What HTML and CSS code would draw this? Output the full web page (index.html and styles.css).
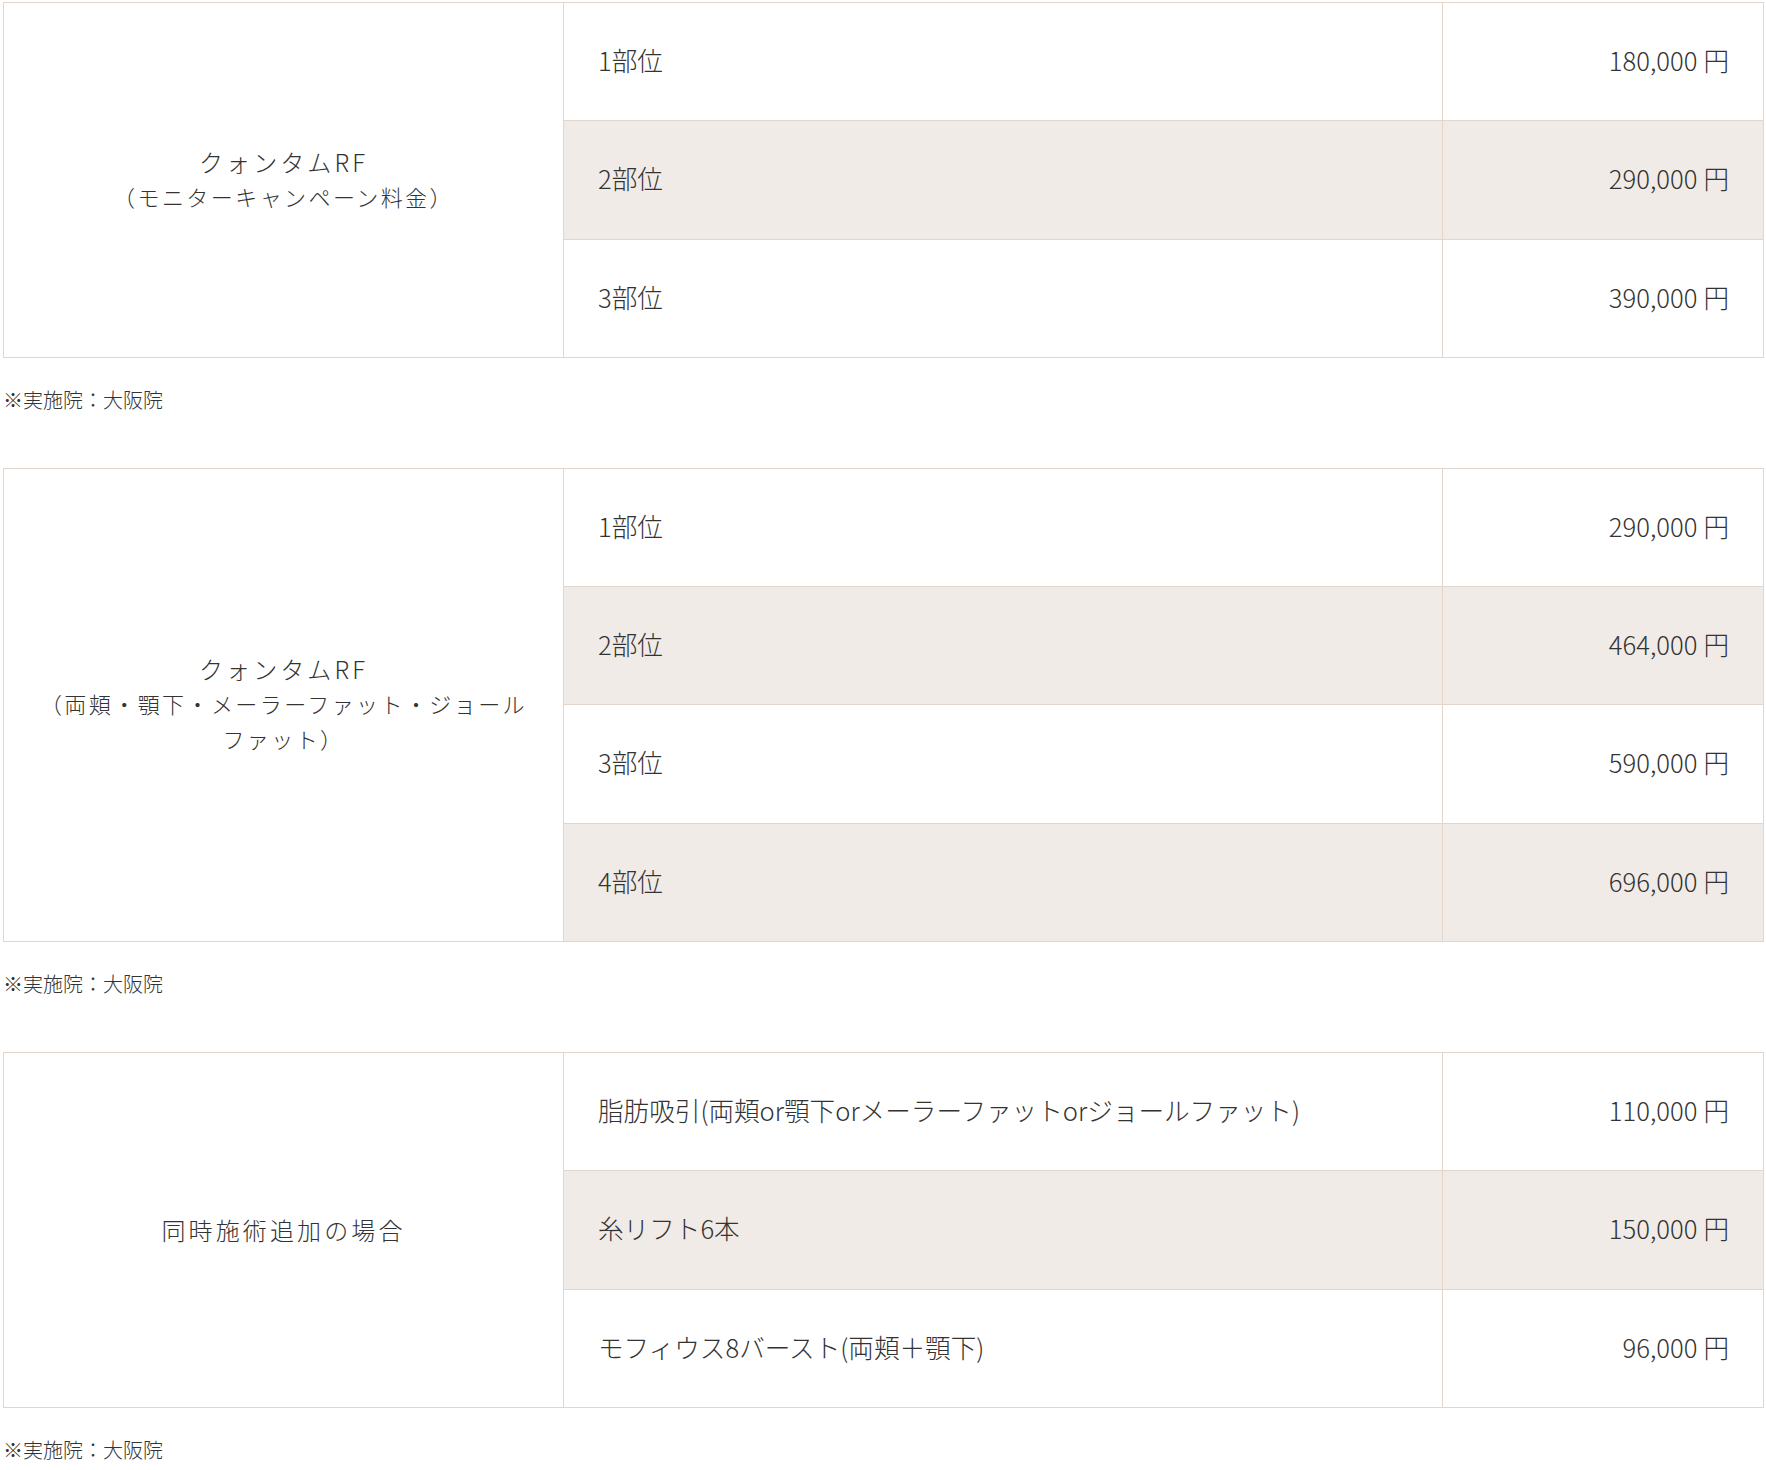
FILE: index.html
```html
<!DOCTYPE html>
<html lang="ja">
<head>
<meta charset="utf-8">
<title>料金表</title>
<link rel="stylesheet" href="styles.css">
</head>
<body>
<div class="page">
  <table class="price-table">
    <colgroup><col class="c-name"><col class="c-item"><col class="c-price"></colgroup>
    <tbody>
      <tr>
        <th rowspan="3" class="name"><span class="title">クォンタムRF</span><span class="sub">（モニターキャンペーン料金）</span></th>
        <td class="item">1部位</td>
        <td class="price">180,000<span class="yen">円</span></td>
      </tr>
      <tr class="alt">
        <td class="item">2部位</td>
        <td class="price">290,000<span class="yen">円</span></td>
      </tr>
      <tr>
        <td class="item">3部位</td>
        <td class="price">390,000<span class="yen">円</span></td>
      </tr>
    </tbody>
  </table>
  <p class="note">※実施院：大阪院</p>

  <table class="price-table">
    <colgroup><col class="c-name"><col class="c-item"><col class="c-price"></colgroup>
    <tbody>
      <tr>
        <th rowspan="4" class="name"><span class="title">クォンタムRF</span><span class="sub">（両頬・顎下・メーラーファット・ジョールファット）</span></th>
        <td class="item">1部位</td>
        <td class="price">290,000<span class="yen">円</span></td>
      </tr>
      <tr class="alt">
        <td class="item">2部位</td>
        <td class="price">464,000<span class="yen">円</span></td>
      </tr>
      <tr>
        <td class="item">3部位</td>
        <td class="price">590,000<span class="yen">円</span></td>
      </tr>
      <tr class="alt">
        <td class="item">4部位</td>
        <td class="price">696,000<span class="yen">円</span></td>
      </tr>
    </tbody>
  </table>
  <p class="note">※実施院：大阪院</p>

  <table class="price-table">
    <colgroup><col class="c-name"><col class="c-item"><col class="c-price"></colgroup>
    <tbody>
      <tr>
        <th rowspan="3" class="name"><span class="title">同時施術追加の場合</span></th>
        <td class="item">脂肪吸引(両頬or顎下orメーラーファットorジョールファット)</td>
        <td class="price">110,000<span class="yen">円</span></td>
      </tr>
      <tr class="alt">
        <td class="item">糸リフト6本</td>
        <td class="price">150,000<span class="yen">円</span></td>
      </tr>
      <tr>
        <td class="item">モフィウス8バースト(両頬＋顎下)</td>
        <td class="price">96,000<span class="yen">円</span></td>
      </tr>
    </tbody>
  </table>
  <p class="note">※実施院：大阪院</p>
</div>
</body>
</html>
```

FILE: styles.css
```css
html, body {
  margin: 0;
  padding: 0;
  background: #ffffff;
}

body {
  font-family: "Noto Sans CJK JP", "Noto Sans", sans-serif;
  color: #333333;
  font-weight: 300;
}

.page {
  padding: 2px 3px 0 3px;
}

.price-table {
  width: 100%;
  border-collapse: collapse;
  table-layout: fixed;
}

.c-name { width: 560px; }
.c-item { width: 879px; }
.c-price { width: 321px; }

.price-table th,
.price-table td {
  border: 1px solid #e2d6cc;
  padding: 0 34px 3px 34px;
  height: 114.3px;
  vertical-align: middle;
  font-weight: 300;
}

.price-table th.name {
  text-align: center;
  line-height: 35px;
  background: #ffffff;
  padding: 0 30px 2px 30px;
  line-break: strict;
}

.title {
  display: block;
  font-size: 24px;
  letter-spacing: 0.13em;
}

.sub {
  display: block;
  font-size: 22px;
  letter-spacing: 0.11em;
}

.item {
  text-align: left;
  font-size: 25.6px;
  line-height: 1.5;
}

.price {
  text-align: right;
  font-size: 25.6px;
  line-height: 1.5;
}

.yen {
  margin-left: 6px;
}

.alt .item,
.alt .price {
  background: #f0ebe6;
}

.note {
  margin: 26px 0 52px 0;
  font-size: 20px;
  line-height: 32px;
  color: #333333;
}
```
